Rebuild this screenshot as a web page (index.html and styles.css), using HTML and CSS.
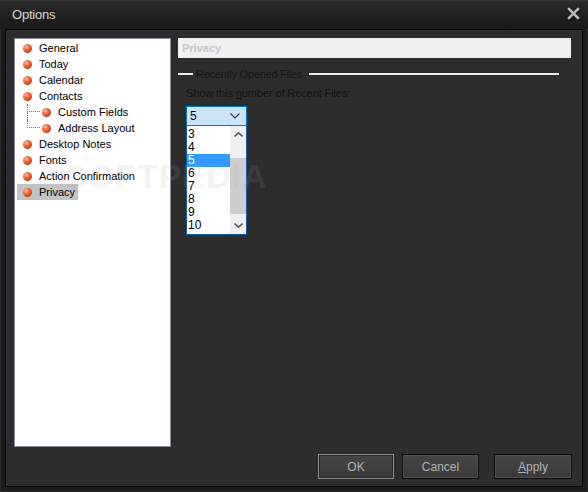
FILE: index.html
```html
<!DOCTYPE html>
<html>
<head>
<meta charset="utf-8">
<link rel="stylesheet" href="styles.css">
</head>
<body>
<div class="window">
  <div class="titlebar">
    <span class="title">Options</span>
    <svg class="close" width="13" height="13" viewBox="0 0 13 13"><path d="M2 2 L11 11 M11 2 L2 11" stroke="#0c0c0c" stroke-width="3.4" stroke-linecap="square" transform="translate(0.5 0.5)"/><path d="M2 2 L11 11 M11 2 L2 11" stroke="#b9b9b9" stroke-width="2.6" stroke-linecap="square"/></svg>
  </div>
  <div class="frame">
    <div class="main">
      <div class="tree">
        <div class="row"><span class="ball"></span><span>General</span></div>
        <div class="row"><span class="ball"></span><span>Today</span></div>
        <div class="row"><span class="ball"></span><span>Calendar</span></div>
        <div class="row"><span class="ball"></span><span>Contacts</span></div>
        <div class="row child"><span class="conn"><span class="conn-top"></span><span class="conn-bot"></span></span><span class="ball"></span><span>Custom Fields</span></div>
        <div class="row child last"><span class="conn"><span class="conn-top"></span><span class="conn-bot"></span></span><span class="ball"></span><span>Address Layout</span></div>
        <div class="row"><span class="ball"></span><span>Desktop Notes</span></div>
        <div class="row"><span class="ball"></span><span>Fonts</span></div>
        <div class="row"><span class="ball"></span><span>Action Confirmation</span></div>
        <div class="row selected"><span class="ball"></span><span>Privacy</span></div>
      </div>
      <div class="panel">
        <div class="header">Privacy</div>
        <div class="legend"><span class="gline short"></span><span class="legend-text">Recently Opened Files</span><span class="gline long"></span></div>
        <div class="label">Show this <u>n</u>umber of Recent Files:</div>
        <div class="combo">
          <div class="combo-box"><span>5</span><svg width="10" height="6" viewBox="0 0 10 6"><path d="M0.5 0.5 L5 5 L9.5 0.5" fill="none" stroke="#3a3a3a" stroke-width="1.1"/></svg></div>
          <div class="list">
            <div class="items">
              <div class="item">3</div>
              <div class="item">4</div>
              <div class="item sel">5</div>
              <div class="item">6</div>
              <div class="item">7</div>
              <div class="item">8</div>
              <div class="item">9</div>
              <div class="item">10</div>
            </div>
            <div class="scroll">
              <div class="sbtn"><svg width="9" height="5" viewBox="0 0 9 5"><path d="M0.5 4.5 L4.5 0.8 L8.5 4.5" fill="none" stroke="#606060" stroke-width="1.6"/></svg></div>
              <div class="sgap"></div>
              <div class="thumb"></div>
              <div class="sfill"></div>
              <div class="sbtn"><svg width="9" height="5" viewBox="0 0 9 5"><path d="M0.5 0.5 L4.5 4.2 L8.5 0.5" fill="none" stroke="#606060" stroke-width="1.6"/></svg></div>
            </div>
          </div>
        </div>
      </div>
    </div>
    <div class="buttons">
      <div class="btn default">OK</div>
      <div class="btn">Cancel</div>
      <div class="btn apply"><u>A</u>pply</div>
    </div>
  </div>
  <div class="watermark">SOFTPEDIA</div>
</div>
</body>
</html>
```
FILE: styles.css
```css
html, body { margin: 0; padding: 0; }
body { background: #1b1b1b; font-family: "Liberation Sans", Arial, sans-serif; }
.window {
  position: relative;
  width: 588px; height: 492px;
  box-sizing: border-box;
  display: flex; flex-direction: column;
  background: #1b1b1b;
  box-shadow: inset 1px 0 #2c2c2c, inset -1px 0 #2c2c2c, inset 0 -1px #2c2c2c;
  overflow: hidden;
}
.titlebar {
  height: 29px; flex: none;
  display: flex; align-items: center; justify-content: space-between;
  padding: 0 8px 0 12px;
  background: linear-gradient(#3a3a3a 0, #2a2a2a 2px, #1f1f1f 60%, #1a1a1a 100%);
}
.title { color: #d6d6d6; font-size: 13px; margin-top: -1px; letter-spacing: -0.2px; }
.close { display: block; margin-top: -2px; }
.frame {
  flex: 1;
  margin: 0 5px 5px 5px;
  border: 1px solid #060606;
  background: #2d2d2d;
  display: flex; flex-direction: column;
  padding: 8px 10px 7px 8px;
  box-sizing: border-box;
}
.main { flex: 1; display: flex; gap: 7px; min-height: 0; margin-right: 1px; }
.tree {
  width: 157px; box-sizing: border-box;
  background: #fff;
  border: 1px solid #8c8c98;
  padding-top: 1px;
  font-size: 11px; color: #000;
}
.row {
  height: 16px; line-height: 16px;
  display: flex; align-items: center;
  margin-left: 2px; padding-left: 6px; padding-right: 3px;
  width: max-content;
}
.row .ball { margin-right: 7px; }
.row.child { padding-left: 10px; margin-left: 2px; }
.row.child .conn { margin-right: 2px; }
.selected { background: #c3c3c3; }
.ball {
  width: 9px; height: 9px; border-radius: 50%; flex: none;
  background: radial-gradient(circle at 35% 32%, #ffc2a0 0, #f07a4c 30%, #d2461e 65%, #9a2a10 100%);
}
.conn { width: 13px; height: 16px; display: flex; flex-direction: column; flex: none; }
.conn-top { height: 8px; box-sizing: border-box; border-left: 1px dotted #7a7a7a; border-bottom: 1px dotted #7a7a7a; }
.conn-bot { flex: 1; border-left: 1px dotted #7a7a7a; }
.last .conn-bot { border-left: none; }
.panel { flex: 1; display: flex; flex-direction: column; }
.header {
  height: 20px; line-height: 20px; background: #f0f0f0;
  padding-left: 4px; font-weight: bold; font-size: 11px; color: #c3c7d2;
}
.legend { margin-top: 9px; height: 14px; display: flex; align-items: center; font-size: 11px; color: #151515; }
.gline { height: 2px; background: #eeeeee; }
.gline.short { width: 15px; margin-right: 3px; }
.gline.long { flex: 1; margin-left: 7px; margin-right: 12px; }
.legend-text { letter-spacing: -0.25px; }
.label { margin: 5px 0 0 8px; height: 14px; line-height: 14px; font-size: 11px; color: #121212; letter-spacing: -0.1px; }
.combo { margin: 6px 0 0 8px; width: 61px; }
.combo-box {
  height: 20px; box-sizing: border-box;
  border: 1px solid #0078d7; background: #cce4f7;
  display: flex; align-items: center; justify-content: space-between;
  padding: 0 6px 0 3px; font-size: 12px; color: #000;
}
.list {
  height: 109px; box-sizing: border-box;
  border: 1px solid #0a5cb0; border-top: none;
  background: #fff; display: flex;
}
.items { width: 43px; font-size: 12px; color: #000; padding-top: 2px; }
.item { height: 13px; line-height: 13px; padding-left: 1px; }
.item.sel { background: #3399ff; color: #fff; }
.scroll { width: 16px; background: #f0f0f0; display: flex; flex-direction: column; }
.sbtn { height: 17px; display: flex; align-items: center; justify-content: center; }
.sgap { height: 15px; }
.thumb { height: 56px; background: #cdcdcd; }
.sfill { flex: 1; }
.buttons { display: flex; justify-content: flex-end; margin-top: 7px; height: 25px; }
.btn {
  width: 77px; height: 25px; box-sizing: border-box;
  border: 1px solid #0a0a0a;
  box-shadow: inset 0 0 0 1px #515151;
  background: linear-gradient(#454545, #3a3a3a);
  color: #b2b2b2; font-size: 12px;
  display: flex; align-items: center; justify-content: center;
  margin-left: 8px;
}
.btn.default { width: 76px; border-color: #8a8a8a; box-shadow: inset 0 0 0 1px #2a2a2a; }
.btn.apply { width: 78px; margin-left: 15px; }
.watermark {
  position: absolute; left: 64px; top: 157px;
  font-size: 34px; font-weight: bold; letter-spacing: 1px;
  color: rgba(170,170,170,0.12);
  pointer-events: none;
}
```
